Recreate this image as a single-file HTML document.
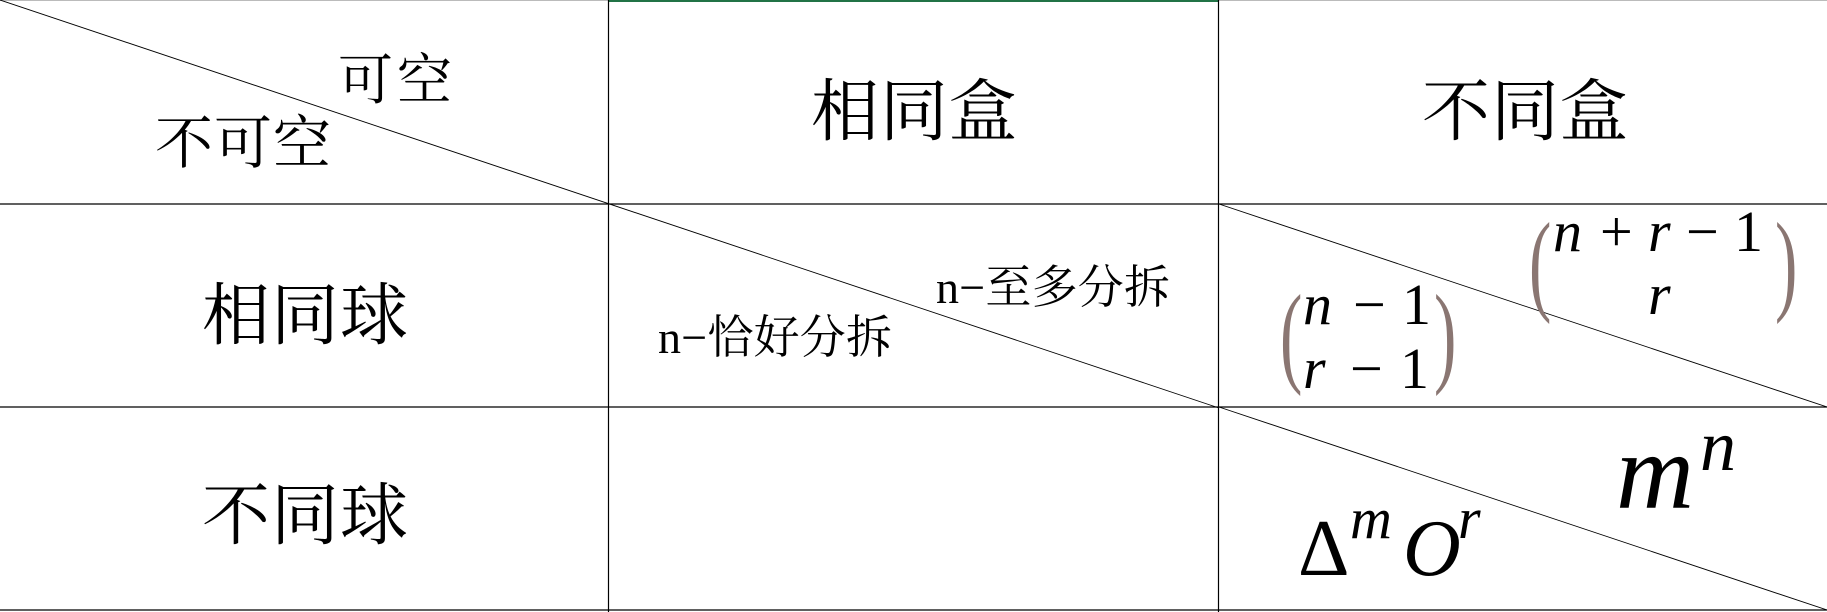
<!DOCTYPE html>
<html><head><meta charset="utf-8"><style>
html,body{margin:0;padding:0;background:#fff;}
svg{display:block;}
.cj{font-family:"Liberation Serif","Noto Serif CJK SC",serif;fill:#000;}
.m{font-family:"Liberation Serif",serif;font-style:italic;fill:#000;}
.mu{font-family:"Liberation Serif",serif;fill:#000;}
.p{font-family:"Liberation Serif",serif;fill:#8a7672;}
</style></head><body>
<svg width="1827" height="612" viewBox="0 0 1827 612" xmlns="http://www.w3.org/2000/svg">
<rect width="1827" height="612" fill="#fff"/>
<line x1="0" y1="0.5" x2="1827" y2="0.5" stroke="#bbb" stroke-width="1"/>
<line x1="608" y1="1" x2="1219" y2="1" stroke="#217346" stroke-width="2"/>
<g stroke="#000" stroke-width="1.2">
<line x1="0" y1="204" x2="1827" y2="204"/>
<line x1="0" y1="407" x2="1827" y2="407"/>
<line x1="0" y1="610" x2="1827" y2="610"/>
<line x1="608.5" y1="0" x2="608.5" y2="612"/>
<line x1="1218.5" y1="0" x2="1218.5" y2="612"/>
</g>
<g stroke="#000" stroke-width="0.9">
<line x1="0" y1="0" x2="1219" y2="408"/>
<line x1="1219" y1="204" x2="1827" y2="407"/>
<line x1="1219" y1="407" x2="1827" y2="610"/>
</g>
<text class="cj" x="338" y="99" font-size="55" textLength="114">可空</text>
<text class="cj" x="155" y="163" font-size="58" textLength="176">不可空</text>
<text class="cj" x="811" y="135" font-size="68" textLength="206">相同盒</text>
<text class="cj" x="1422" y="135" font-size="68" textLength="206">不同盒</text>
<text class="cj" x="202" y="339" font-size="68" textLength="206">相同球</text>
<text class="cj" x="202" y="539" font-size="68" textLength="206">不同球</text>
<text class="cj" x="936" y="303" font-size="46" textLength="234">n−至多分拆</text>
<text class="cj" x="658" y="353" font-size="46" textLength="234">n−恰好分拆</text>
<!-- binom (n-1, r-1) -->
<text class="p" x="1280" y="372" font-size="112" transform="scale(0.6,1)" transform-origin="1280 372">(</text>
<text class="p" x="1434" y="372" font-size="112" transform="scale(0.6,1)" transform-origin="1434 372">)</text>
<text class="m" x="1303" y="324" font-size="58">n</text>
<text class="mu" x="1353" y="324" font-size="58">−</text>
<text class="mu" x="1402" y="324" font-size="58">1</text>
<text class="m" x="1303" y="388" font-size="58">r</text>
<text class="mu" x="1350" y="388" font-size="58">−</text>
<text class="mu" x="1400" y="388" font-size="58">1</text>
<!-- binom (n+r-1, r) -->
<text class="p" x="1529" y="300" font-size="112" transform="scale(0.6,1)" transform-origin="1529 300">(</text>
<text class="p" x="1775" y="300" font-size="112" transform="scale(0.6,1)" transform-origin="1775 300">)</text>
<text class="m" x="1553" y="251" font-size="58">n</text>
<text class="mu" x="1600" y="251" font-size="58">+</text>
<text class="m" x="1648" y="251" font-size="58">r</text>
<text class="mu" x="1686" y="251" font-size="58">−</text>
<text class="mu" x="1734" y="251" font-size="58">1</text>
<text class="m" x="1648" y="314" font-size="58">r</text>
<!-- Δ^m O^r -->
<text class="mu" x="1298" y="575" font-size="80">Δ</text>
<text class="m" x="1350" y="538" font-size="58">m</text>
<text class="m" x="1403" y="575" font-size="80">O</text>
<text class="m" x="1458" y="538" font-size="58">r</text>
<!-- m^n -->
<text class="m" x="1616" y="508" font-size="108">m</text>
<text class="m" x="1700" y="470" font-size="72">n</text>
</svg>
</body></html>
